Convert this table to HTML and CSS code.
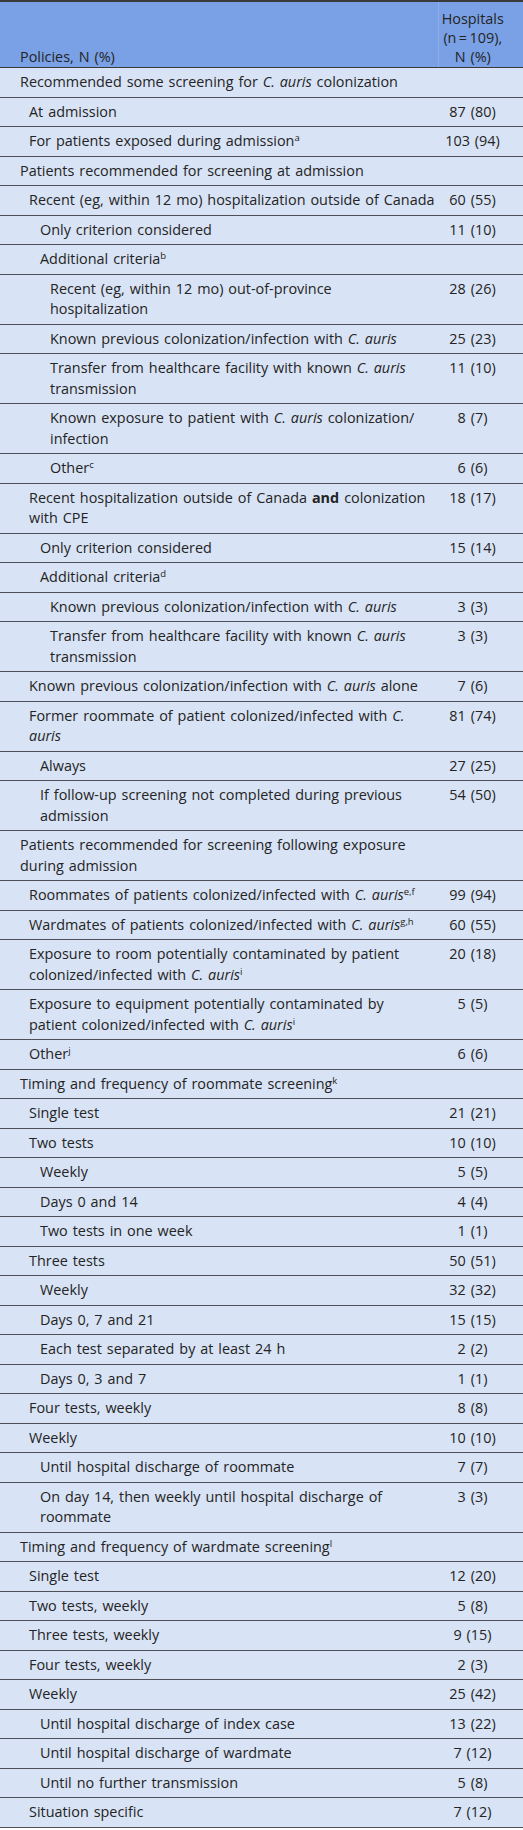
FILE: index.html
```html
<!DOCTYPE html>
<html lang="en">
<head>
<meta charset="utf-8">
<title>Policies table</title>
<link rel="stylesheet" href="styles.css">
</head>
<body>
<table class="policy-table">
  <colgroup><col class="col-label"><col class="col-value"></colgroup>
  <thead>
    <tr>
      <th class="h-label">Policies, N (%)</th>
      <th class="h-value">Hospitals<br>(n&#8201;=&#8201;109),<br>N (%)</th>
    </tr>
  </thead>
  <tbody>
    <tr class="l0"><td>Recommended some screening for <i>C. auris</i> colonization</td><td></td></tr>
    <tr class="l1"><td>At admission</td><td>87 (80)</td></tr>
    <tr class="l1"><td>For patients exposed during admission<sup>a</sup></td><td>103 (94)</td></tr>
    <tr class="l0"><td>Patients recommended for screening at admission</td><td></td></tr>
    <tr class="l1"><td class="keep-line">Recent (eg, within 12 mo) hospitalization outside of Canada</td><td>60 (55)</td></tr>
    <tr class="l2"><td>Only criterion considered</td><td>11 (10)</td></tr>
    <tr class="l2"><td>Additional criteria<sup>b</sup></td><td></td></tr>
    <tr class="l3"><td>Recent (eg, within 12 mo) out-of-province hospitalization</td><td>28 (26)</td></tr>
    <tr class="l3"><td>Known previous colonization/infection with <i>C. auris</i></td><td>25 (23)</td></tr>
    <tr class="l3"><td>Transfer from healthcare facility with known <i>C. auris</i> transmission</td><td>11 (10)</td></tr>
    <tr class="l3"><td>Known exposure to patient with <i>C. auris</i> colonization/ infection</td><td>8 (7)</td></tr>
    <tr class="l3"><td>Other<sup>c</sup></td><td>6 (6)</td></tr>
    <tr class="l1"><td>Recent hospitalization outside of Canada <b>and</b> colonization with CPE</td><td>18 (17)</td></tr>
    <tr class="l2"><td>Only criterion considered</td><td>15 (14)</td></tr>
    <tr class="l2"><td>Additional criteria<sup>d</sup></td><td></td></tr>
    <tr class="l3"><td>Known previous colonization/infection with <i>C. auris</i></td><td>3 (3)</td></tr>
    <tr class="l3"><td>Transfer from healthcare facility with known <i>C. auris</i> transmission</td><td>3 (3)</td></tr>
    <tr class="l1"><td>Known previous colonization/infection with <i>C. auris</i> alone</td><td>7 (6)</td></tr>
    <tr class="l1"><td>Former roommate of patient colonized/infected with <i>C. auris</i></td><td>81 (74)</td></tr>
    <tr class="l2"><td>Always</td><td>27 (25)</td></tr>
    <tr class="l2"><td>If follow-up screening not completed during previous admission</td><td>54 (50)</td></tr>
    <tr class="l0"><td>Patients recommended for screening following exposure during admission</td><td></td></tr>
    <tr class="l1"><td>Roommates of patients colonized/infected with <i>C. auris</i><sup>e,f</sup></td><td>99 (94)</td></tr>
    <tr class="l1"><td>Wardmates of patients colonized/infected with <i>C. auris</i><sup>g,h</sup></td><td>60 (55)</td></tr>
    <tr class="l1"><td>Exposure to room potentially contaminated by patient colonized/infected with <i>C. auris</i><sup>i</sup></td><td>20 (18)</td></tr>
    <tr class="l1"><td>Exposure to equipment potentially contaminated by patient colonized/infected with <i>C. auris</i><sup>i</sup></td><td>5 (5)</td></tr>
    <tr class="l1"><td>Other<sup>j</sup></td><td>6 (6)</td></tr>
    <tr class="l0"><td>Timing and frequency of roommate screening<sup>k</sup></td><td></td></tr>
    <tr class="l1"><td>Single test</td><td>21 (21)</td></tr>
    <tr class="l1"><td>Two tests</td><td>10 (10)</td></tr>
    <tr class="l2"><td>Weekly</td><td>5 (5)</td></tr>
    <tr class="l2"><td>Days 0 and 14</td><td>4 (4)</td></tr>
    <tr class="l2"><td>Two tests in one week</td><td>1 (1)</td></tr>
    <tr class="l1"><td>Three tests</td><td>50 (51)</td></tr>
    <tr class="l2"><td>Weekly</td><td>32 (32)</td></tr>
    <tr class="l2"><td>Days 0, 7 and 21</td><td>15 (15)</td></tr>
    <tr class="l2"><td>Each test separated by at least 24 h</td><td>2 (2)</td></tr>
    <tr class="l2"><td>Days 0, 3 and 7</td><td>1 (1)</td></tr>
    <tr class="l1"><td>Four tests, weekly</td><td>8 (8)</td></tr>
    <tr class="l1"><td>Weekly</td><td>10 (10)</td></tr>
    <tr class="l2"><td>Until hospital discharge of roommate</td><td>7 (7)</td></tr>
    <tr class="l2"><td>On day 14, then weekly until hospital discharge of roommate</td><td>3 (3)</td></tr>
    <tr class="l0"><td>Timing and frequency of wardmate screening<sup>l</sup></td><td></td></tr>
    <tr class="l1"><td>Single test</td><td>12 (20)</td></tr>
    <tr class="l1"><td>Two tests, weekly</td><td>5 (8)</td></tr>
    <tr class="l1"><td>Three tests, weekly</td><td>9 (15)</td></tr>
    <tr class="l1"><td>Four tests, weekly</td><td>2 (3)</td></tr>
    <tr class="l1"><td>Weekly</td><td>25 (42)</td></tr>
    <tr class="l2"><td>Until hospital discharge of index case</td><td>13 (22)</td></tr>
    <tr class="l2"><td>Until hospital discharge of wardmate</td><td>7 (12)</td></tr>
    <tr class="l2"><td>Until no further transmission</td><td>5 (8)</td></tr>
    <tr class="l1"><td>Situation specific</td><td>7 (12)</td></tr>
  </tbody>
</table>
</body>
</html>
```

FILE: styles.css
```css
html, body {
  margin: 0;
  padding: 0;
  background: #ffffff;
}

.policy-table {
  width: 523px;
  border-collapse: collapse;
  table-layout: fixed;
  font-family: "Open Sans", "Noto Sans", sans-serif;
  font-size: 14.4px;
  word-spacing: 1.2px;
  line-height: 20.5px;
  color: #242424;
  background: #d8e3f5;
  border-top: 2px solid #3a3a3a;
}

.col-label { width: 438px; }
.col-value { width: 85px; }

.policy-table thead th {
  background: #7aa1e5;
  font-weight: normal;
  vertical-align: bottom;
  padding: 7px 0 1px 0;
  line-height: 19px;
  border-bottom: 1px solid #3a3a3a;
}

.policy-table thead .h-label {
  text-align: left;
  padding-left: 20px;
}

.policy-table thead .h-value {
  text-align: center;
  padding-right: 16px;
  border-left: 1px solid #8eb0ea;
}

.policy-table tbody td {
  padding: 4px 6px 4px 0;
  border-bottom: 1px solid #4d5057;
  vertical-align: top;
}

.policy-table tbody td + td {
  text-align: center;
  padding-right: 16px;
  padding-left: 0;
  white-space: nowrap;
}

.policy-table tbody td.keep-line {
  white-space: nowrap;
  padding-right: 0;
}

.l0 td:first-child { padding-left: 20px; }
.l1 td:first-child { padding-left: 29px; }
.l2 td:first-child { padding-left: 40px; }
.l3 td:first-child { padding-left: 50px; }

.policy-table sup {
  font-size: 9.5px;
  line-height: 0;
  vertical-align: 5px;
  word-spacing: 0;
}
```
